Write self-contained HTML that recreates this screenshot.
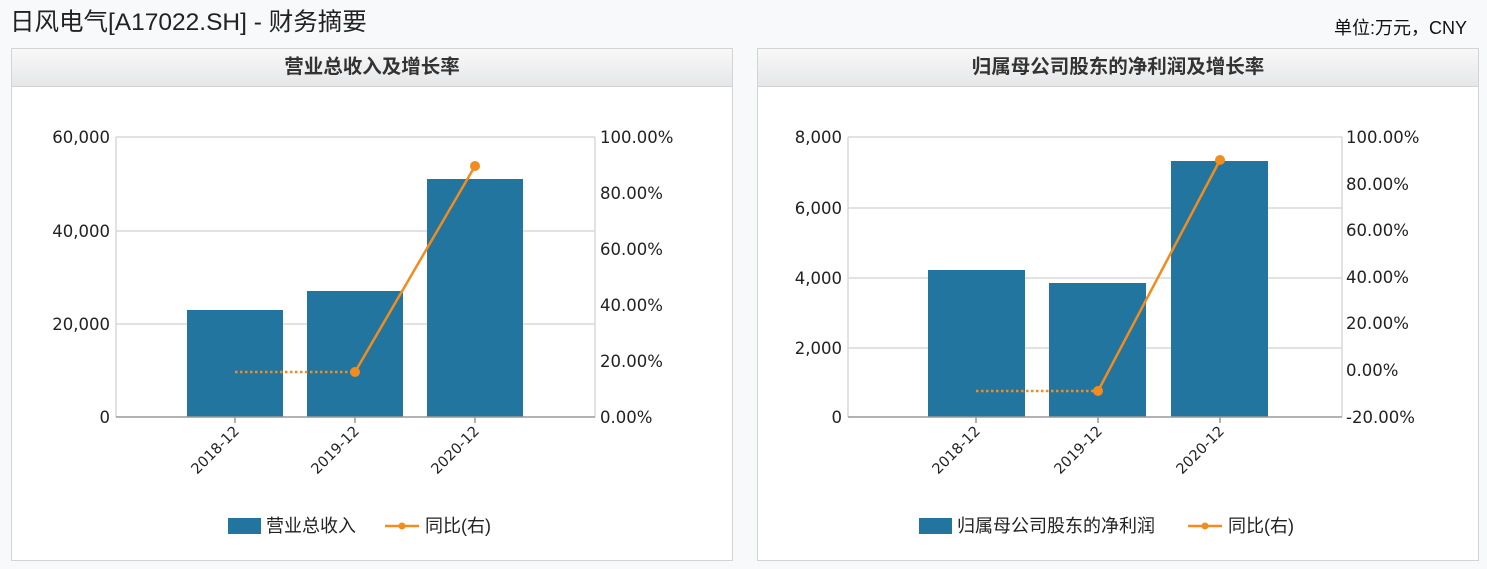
<!DOCTYPE html>
<html><head><meta charset="utf-8"><style>
body{margin:0;width:1487px;height:569px;background:#f8f9fb;font-family:"Liberation Sans","Noto Sans CJK SC",sans-serif;overflow:hidden;position:relative}
.t{position:absolute;left:10px;top:3px;font-size:24.5px;color:#222}
.u{position:absolute;right:20px;top:14px;font-size:18px;color:#111}
.p{position:absolute;top:48px;width:720px;height:511px;border:1px solid #d4d4d4;background:#fff}
.h{height:37px;border-bottom:1px solid #d4d4d4;background:linear-gradient(#f8f8f8,#e6e7e9);text-align:center;line-height:37px;font-size:19.5px;font-weight:bold;color:#333}
svg{position:absolute;left:0;top:0}
svg text{font-family:"DejaVu Sans","Noto Sans CJK SC",sans-serif;font-size:16.5px;fill:#222}
svg text.l{font-family:"Liberation Sans","Noto Sans CJK SC",sans-serif;font-size:18px}
</style></head><body>
<div class="t">日风电气[A17022.SH] - 财务摘要</div>
<div class="u">单位:万元，CNY</div>
<div class="p" style="left:11px"><div class="h">营业总收入及增长率</div></div>
<div class="p" style="left:757px"><div class="h">归属母公司股东的净利润及增长率</div></div>
<svg width="1487" height="569">
<g stroke="#d8d8d8" stroke-width="1.5">
<line x1="116" y1="137" x2="595" y2="137"/><line x1="116" y1="231" x2="595" y2="231"/><line x1="116" y1="324" x2="595" y2="324"/>
<line x1="116" y1="137" x2="116" y2="417"/><line x1="595" y1="137" x2="595" y2="417"/>
<line x1="848" y1="137" x2="1342" y2="137"/><line x1="848" y1="208" x2="1342" y2="208"/><line x1="848" y1="278" x2="1342" y2="278"/><line x1="848" y1="348" x2="1342" y2="348"/>
<line x1="848" y1="137" x2="848" y2="417"/><line x1="1342" y1="137" x2="1342" y2="417"/>
</g>
<g fill="#22759f">
<rect x="187" y="310" width="96" height="107"/><rect x="307" y="291" width="96" height="126"/><rect x="427" y="179" width="96" height="238"/>
<rect x="928" y="270" width="97" height="147"/><rect x="1049" y="283" width="97" height="134"/><rect x="1171" y="161" width="97" height="256"/>
</g>
<g stroke="#999" stroke-width="1.5">
<line x1="116" y1="417" x2="595" y2="417"/><line x1="848" y1="417" x2="1342" y2="417"/>
<line x1="235" y1="417" x2="235" y2="423"/><line x1="355" y1="417" x2="355" y2="423"/><line x1="475" y1="417" x2="475" y2="423"/>
<line x1="976" y1="417" x2="976" y2="423"/><line x1="1098" y1="417" x2="1098" y2="423"/><line x1="1220" y1="417" x2="1220" y2="423"/>
</g>
<g stroke="#f28c1e" stroke-width="2.5" fill="none">
<line x1="235" y1="372" x2="355" y2="372" stroke-dasharray="2.5 2.5"/><line x1="355" y1="372" x2="475" y2="166"/>
<line x1="976" y1="391" x2="1098" y2="391" stroke-dasharray="2.5 2.5"/><line x1="1098" y1="391" x2="1220" y2="160"/>
</g>
<g fill="#f28c1e"><circle cx="355" cy="372" r="5"/><circle cx="475" cy="166" r="5"/><circle cx="1098" cy="391" r="5"/><circle cx="1220" cy="160" r="5"/></g>
<g text-anchor="end">
<text x="110" y="143">60,000</text><text x="110" y="237">40,000</text><text x="110" y="330">20,000</text><text x="110" y="423">0</text>
<text x="842" y="143">8,000</text><text x="842" y="214">6,000</text><text x="842" y="284">4,000</text><text x="842" y="354">2,000</text><text x="842" y="423">0</text>
</g>
<g>
<text x="600" y="143">100.00%</text><text x="600" y="199">80.00%</text><text x="600" y="255">60.00%</text><text x="600" y="311">40.00%</text><text x="600" y="367">20.00%</text><text x="600" y="423">0.00%</text>
<text x="1346" y="143">100.00%</text><text x="1346" y="190">80.00%</text><text x="1346" y="236">60.00%</text><text x="1346" y="283">40.00%</text><text x="1346" y="329">20.00%</text><text x="1346" y="376">0.00%</text><text x="1346" y="423">-20.00%</text>
</g>
<g text-anchor="end" style="font-size:14.5px">
<text style="font-size:14.5px" transform="translate(240,432) rotate(-45)">2018-12</text><text style="font-size:14.5px" transform="translate(360,432) rotate(-45)">2019-12</text><text style="font-size:14.5px" transform="translate(480,432) rotate(-45)">2020-12</text>
<text style="font-size:14.5px" transform="translate(981,432) rotate(-45)">2018-12</text><text style="font-size:14.5px" transform="translate(1103,432) rotate(-45)">2019-12</text><text style="font-size:14.5px" transform="translate(1225,432) rotate(-45)">2020-12</text>
</g>
<rect x="228" y="518" width="33" height="16" fill="#22759f"/><text class="l" x="266" y="532">营业总收入</text>
<line x1="385" y1="526" x2="419" y2="526" stroke="#f28c1e" stroke-width="2.5"/><circle cx="402" cy="526" r="3.5" fill="#f28c1e"/><text class="l" x="425" y="532">同比(右)</text>
<rect x="919" y="518" width="33" height="16" fill="#22759f"/><text class="l" x="957" y="532">归属母公司股东的净利润</text>
<line x1="1188" y1="526" x2="1222" y2="526" stroke="#f28c1e" stroke-width="2.5"/><circle cx="1205" cy="526" r="3.5" fill="#f28c1e"/><text class="l" x="1228" y="532">同比(右)</text>
</svg>
</body></html>
